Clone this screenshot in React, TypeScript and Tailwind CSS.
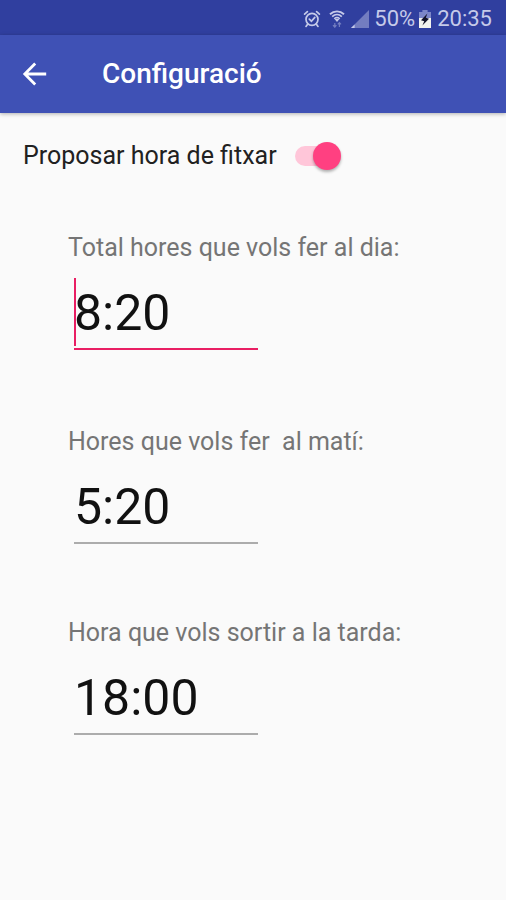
import React, { useState } from 'react';

interface TimeFieldProps {
  id: string;
  label: string;
  value: string;
  active?: boolean;
  onChange: (value: string) => void;
}

const StatusBar: React.FC = () => (
  <div className="h-[35px] pt-[2px] bg-[#303f9f] flex items-center justify-end pr-[14px] text-[#c5cae9] text-[22px] leading-[32px]">
    <svg className="w-[18px] h-[18px] mr-[8px]" viewBox="0 0 18 18" fill="none" stroke="currentColor" strokeWidth="1.7" strokeLinecap="round">
      <circle cx="9" cy="9.3" r="6" />
      <path d="M1.6 4.2 4.4 1.6M16.4 4.2 13.6 1.6M4.6 14.2 3 16.4M13.4 14.2 15 16.4" />
      <path d="M6.3 9.2 8.4 11.2 11.8 7.4" />
    </svg>
    <svg className="w-[16px] h-[18px] mr-[6px]" viewBox="0 0 16 18" fill="none" stroke="currentColor">
      <path d="M1 4.2C5 .4 11 .4 15 4.2" strokeWidth="1.9" />
      <path d="M3.2 6.6C6 4 10 4 12.8 6.6" strokeWidth="1.7" />
      <path d="M5.2 8.8C7 7.2 9 7.2 10.8 8.8" strokeWidth="1.5" />
      <path d="M8 12 5.4 8.8H10.6Z" fill="currentColor" stroke="none" />
      <path d="M5.8 17.4V13M4 15.2 5.8 17.2 7.4 15.2M10.4 12.4V17M8.8 14.4 10.4 12.6 12 14.4" strokeWidth="1.2" opacity=".45" />
    </svg>
    <svg className="w-[18px] h-[18px] mr-[5px]" viewBox="0 0 18 18" fill="currentColor">
      <path d="M18 0V18H0Z" opacity=".45" />
      <path d="M3.6 14.4V18H0Z" />
    </svg>
    <span>50%</span>
    <svg className="w-[12px] h-[18px] ml-[4px] mr-[6px]" viewBox="0 0 12 18">
      <path d="M3.4 0H8.6V2H12V9H0V2H3.4Z" fill="#7c86c8" />
      <path d="M0 8H12V18H0Z" fill="#f2f2ee" />
      <path d="M8.4 3.6 2 10.2 5.2 11.2 3.4 15.4 10 8.8 6.8 7.8Z" fill="#15152b" />
    </svg>
    <span>20:35</span>
  </div>
);

const TimeField: React.FC<TimeFieldProps> = ({ id, label, value, active, onChange }) => (
  <div>
    <label htmlFor={id} className="block text-[25px] leading-[30px] text-[#757575] whitespace-pre">{label}</label>
    <div className="relative mt-[15px] ml-[6px] w-[184px]">
      <input
        id={id}
        type="text"
        value={value}
        onChange={e => onChange(e.target.value)}
        className={`block w-full h-[72px] border-b-2 bg-transparent text-[50px] leading-[68px] text-[#111111] outline-none ${active ? 'border-[#e91e63]' : 'border-[#acacac]'}`}
      />
      {active && <span className="absolute left-0 top-0 w-[2px] h-[68px] bg-[#e91e63]" />}
    </div>
  </div>
);

export default function App() {
  const [propose, setPropose] = useState(true);
  const [total, setTotal] = useState('8:20');
  const [morning, setMorning] = useState('5:20');
  const [leave, setLeave] = useState('18:00');

  return (
    <div className="min-h-screen bg-[#fafafa] font-[Roboto,sans-serif]">
      <StatusBar />

      <header className="relative h-[78px] bg-[#3f51b5] flex items-center pl-[22px] text-white shadow-[0_1px_4px_rgba(0,0,0,0.3)]">
        <button type="button" aria-label="Enrere" className="w-[26px] h-[26px]">
          <svg viewBox="0 0 26 26" fill="none" stroke="currentColor" strokeWidth="2.8">
            <path d="M24.2 13H3M13.2 2.6 2.8 13 13.2 23.4" />
          </svg>
        </button>
        <h1 className="ml-[54px] text-[28px] leading-[34px] font-medium">Configuració</h1>
      </header>

      <main className="pt-[28px] pl-[23px]">
        <div className="flex items-center h-[30px] gap-[18px]">
          <label htmlFor="propose" className="text-[25px] leading-[30px] text-[#212121]">Proposar hora de fitxar</label>
          <input
            id="propose"
            type="checkbox"
            role="switch"
            checked={propose}
            onChange={e => setPropose(e.target.checked)}
            className="relative appearance-none w-[44px] h-[20px] rounded-full bg-[#bdbdbd] checked:bg-[#ffc6d9] before:absolute before:-top-[4px] before:left-0 checked:before:left-[18px] before:size-[28px] before:rounded-full before:bg-[#fafafa] checked:before:bg-[#ff4081] before:shadow-[0_2px_3px_rgba(0,0,0,0.3)]"
          />
        </div>

        <div className="mt-[62px] pl-[45px]">
          <TimeField id="total" label="Total hores que vols fer al dia:" value={total} onChange={setTotal} active />
          <div className="mt-[77px] space-y-[74px]">
            <TimeField id="morning" label="Hores que vols fer  al matí:" value={morning} onChange={setMorning} />
            <TimeField id="leave" label="Hora que vols sortir a la tarda:" value={leave} onChange={setLeave} />
          </div>
        </div>
      </main>
    </div>
  );
}
